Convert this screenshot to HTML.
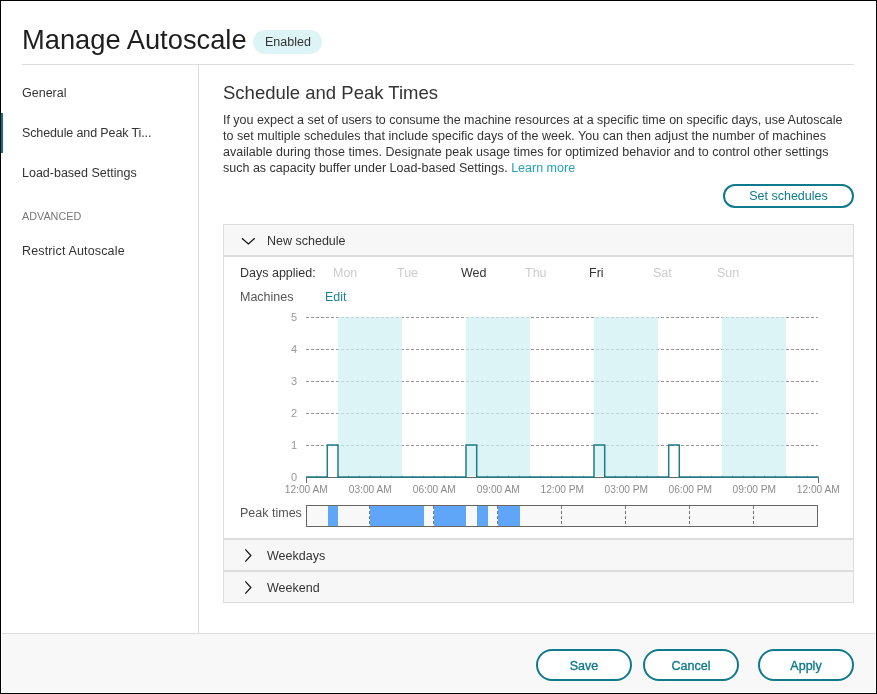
<!DOCTYPE html>
<html><head><meta charset="utf-8">
<style>
html,body{margin:0;padding:0;}
body{width:877px;height:694px;position:relative;overflow:hidden;background:#fff;font-family:"Liberation Sans",sans-serif;color:#333;}
.root{position:absolute;left:0;top:0;width:877px;height:694px;background:#fff;will-change:transform;}
.frame{position:absolute;left:0;top:0;width:875px;height:692px;border:1px solid #000;}
.a{position:absolute;white-space:nowrap;}
.t{font-size:12.5px;line-height:16px;}
.title{left:22px;top:24px;font-size:27.3px;line-height:32px;color:#1e1e1e;}
.badge{left:253px;top:30px;width:69px;height:24px;border-radius:12px;background:#dcf4f5;}
.badge span{position:absolute;left:12px;top:4px;font-size:12.5px;line-height:16px;color:#333;}
.hr{left:22px;top:64px;width:832px;height:1px;background:#ddd;}
.vsep{left:198px;top:65px;width:1px;height:568px;background:#ddd;}
.nav{left:22px;color:#333;}
.ind{left:1px;top:113px;width:2px;height:40px;background:#02778a;}
.adv{left:22px;font-size:10.8px;line-height:14px;color:#777;}
.h2{left:223px;top:82px;font-size:18.5px;line-height:22px;color:#333;}
.para{left:223px;top:112px;color:#333;}
.learn{color:#22a2b5;}
.btn{box-sizing:border-box;border:2px solid #0e7a8b;border-radius:16px;background:#fff;color:#0e7a8b;text-align:center;}
.acc{left:223px;top:224px;width:629px;height:377px;border:1px solid #ddd;}
.acc-h{position:absolute;left:0;width:629px;background:#f7f7f7;}
.footer{left:2px;top:633px;width:873px;height:58px;background:#f8f8f8;border-top:1px solid #ddd;}
</style></head>
<body>
<div class="root">
<div class="frame"></div>
<div class="a title">Manage Autoscale</div>
<div class="a badge"><span>Enabled</span></div>
<div class="a hr"></div>
<div class="a vsep"></div>

<div class="a ind"></div>
<div class="a t nav" style="top:85px">General</div>
<div class="a t nav" style="top:125px;letter-spacing:-0.12px">Schedule and Peak Ti...</div>
<div class="a t nav" style="top:165px">Load-based Settings</div>
<div class="a adv" style="top:209px">ADVANCED</div>
<div class="a t nav" style="top:243px;letter-spacing:0.15px">Restrict Autoscale</div>

<div class="a h2">Schedule and Peak Times</div>
<div class="a t para"><span style="letter-spacing:-0.016px">If you expect a set of users to consume the machine resources at a specific time on specific days, use Autoscale</span><br><span style="letter-spacing:0.025px">to set multiple schedules that include specific days of the week. You can then adjust the number of machines</span><br><span style="letter-spacing:0.016px">available during those times. Designate peak usage times for optimized behavior and to control other settings</span><br>such as capacity buffer under Load-based Settings. <span class="learn">Learn more</span></div>

<div class="a btn t" style="left:723px;top:184px;width:131px;height:24px;line-height:20px;">Set schedules</div>

<div class="a acc">
  <div class="acc-h" style="top:0;height:30px;border-bottom:2px solid #ddd;"></div>
  <div class="acc-h" style="top:313px;height:30px;border-top:2px solid #ddd;"></div>
  <div class="acc-h" style="top:345px;height:30px;border-top:2px solid #ddd;"></div>
</div>

<svg class="a" style="left:0;top:0" width="877" height="694" viewBox="0 0 877 694" font-family="Liberation Sans, sans-serif">
<polyline points="241.9,238.2 248.4,243.9 254.7,238.2" fill="none" stroke="#111" stroke-width="1.2"/>
<polyline points="245.3,549.3 250.9,555.5 245.3,561.7" fill="none" stroke="#111" stroke-width="1.2"/>
<polyline points="245.3,581.3 250.9,587.5 245.3,593.7" fill="none" stroke="#111" stroke-width="1.2"/>
<!--CHART-->
<line x1="306" y1="317.5" x2="818" y2="317.5" stroke="#999" stroke-dasharray="3 2"/>
<line x1="306" y1="349.5" x2="818" y2="349.5" stroke="#999" stroke-dasharray="3 2"/>
<line x1="306" y1="381.5" x2="818" y2="381.5" stroke="#999" stroke-dasharray="3 2"/>
<line x1="306" y1="413.5" x2="818" y2="413.5" stroke="#999" stroke-dasharray="3 2"/>
<line x1="306" y1="445.5" x2="818" y2="445.5" stroke="#999" stroke-dasharray="3 2"/>
<rect x="338.0" y="317" width="64.0" height="159" fill="#cdf0f1" fill-opacity="0.7"/>
<rect x="466.0" y="317" width="64.0" height="159" fill="#cdf0f1" fill-opacity="0.7"/>
<rect x="594.0" y="317" width="64.0" height="159" fill="#cdf0f1" fill-opacity="0.7"/>
<rect x="722.0" y="317" width="64.0" height="159" fill="#cdf0f1" fill-opacity="0.7"/>
<text x="297" y="321" text-anchor="end" font-size="11" fill="#999">5</text>
<text x="297" y="353" text-anchor="end" font-size="11" fill="#999">4</text>
<text x="297" y="385" text-anchor="end" font-size="11" fill="#999">3</text>
<text x="297" y="417" text-anchor="end" font-size="11" fill="#999">2</text>
<text x="297" y="449" text-anchor="end" font-size="11" fill="#999">1</text>
<text x="297" y="481" text-anchor="end" font-size="11" fill="#999">0</text>
<path d="M306.5,483 V477.5 H818.5 V483" fill="none" stroke="#666"/>
<path d="M306,477 H327.3 V445 H338.0 V477 H466.0 V445 H476.7 V477 H594.0 V445 H604.7 V477 H668.7 V445 H679.3 V477 H818.7" fill="none" stroke="#1f7d8b" stroke-width="1.5"/>
<path d="M316.67,475.6V477.5M327.33,475.6V477.5M338.00,475.6V477.5M348.67,475.6V477.5M359.33,475.6V477.5M370.00,475.6V477.5M380.67,475.6V477.5M391.33,475.6V477.5M402.00,475.6V477.5M412.67,475.6V477.5M423.33,475.6V477.5M434.00,475.6V477.5M444.67,475.6V477.5M455.33,475.6V477.5M466.00,475.6V477.5M476.67,475.6V477.5M487.33,475.6V477.5M498.00,475.6V477.5M508.67,475.6V477.5M519.33,475.6V477.5M530.00,475.6V477.5M540.67,475.6V477.5M551.33,475.6V477.5M562.00,475.6V477.5M572.67,475.6V477.5M583.33,475.6V477.5M594.00,475.6V477.5M604.67,475.6V477.5M615.33,475.6V477.5M626.00,475.6V477.5M636.67,475.6V477.5M647.33,475.6V477.5M658.00,475.6V477.5M668.67,475.6V477.5M679.33,475.6V477.5M690.00,475.6V477.5M700.67,475.6V477.5M711.33,475.6V477.5M722.00,475.6V477.5M732.67,475.6V477.5M743.33,475.6V477.5M754.00,475.6V477.5M764.67,475.6V477.5M775.33,475.6V477.5M786.00,475.6V477.5M796.67,475.6V477.5M807.33,475.6V477.5" stroke="#1b6773" stroke-width="1" stroke-opacity="0.45"/>
<text x="306.3" y="493" text-anchor="middle" font-size="10.2" fill="#8c8c8c">12:00 AM</text>
<text x="370.3" y="493" text-anchor="middle" font-size="10.2" fill="#8c8c8c">03:00 AM</text>
<text x="434.3" y="493" text-anchor="middle" font-size="10.2" fill="#8c8c8c">06:00 AM</text>
<text x="498.3" y="493" text-anchor="middle" font-size="10.2" fill="#8c8c8c">09:00 AM</text>
<text x="562.3" y="493" text-anchor="middle" font-size="10.2" fill="#8c8c8c">12:00 PM</text>
<text x="626.3" y="493" text-anchor="middle" font-size="10.2" fill="#8c8c8c">03:00 PM</text>
<text x="690.3" y="493" text-anchor="middle" font-size="10.2" fill="#8c8c8c">06:00 PM</text>
<text x="754.3" y="493" text-anchor="middle" font-size="10.2" fill="#8c8c8c">09:00 PM</text>
<text x="818.3" y="493" text-anchor="middle" font-size="10.2" fill="#8c8c8c">12:00 AM</text>
<rect x="306.5" y="505.5" width="511" height="21" fill="#f8f8f8" stroke="#666"/>
<rect x="328" y="506" width="10" height="20" fill="#5fa5f8"/>
<rect x="370" y="506" width="54" height="20" fill="#5fa5f8"/>
<rect x="434" y="506" width="32" height="20" fill="#5fa5f8"/>
<rect x="477" y="506" width="11" height="20" fill="#5fa5f8"/>
<rect x="498" y="506" width="22" height="20" fill="#5fa5f8"/>
<line x1="369.5" y1="506" x2="369.5" y2="526" stroke="#777" stroke-dasharray="3 2"/>
<line x1="433.5" y1="506" x2="433.5" y2="526" stroke="#777" stroke-dasharray="3 2"/>
<line x1="497.5" y1="506" x2="497.5" y2="526" stroke="#777" stroke-dasharray="3 2"/>
<line x1="561.5" y1="506" x2="561.5" y2="526" stroke="#777" stroke-dasharray="3 2"/>
<line x1="625.5" y1="506" x2="625.5" y2="526" stroke="#777" stroke-dasharray="3 2"/>
<line x1="689.5" y1="506" x2="689.5" y2="526" stroke="#777" stroke-dasharray="3 2"/>
<line x1="753.5" y1="506" x2="753.5" y2="526" stroke="#777" stroke-dasharray="3 2"/>
<!--/CHART-->
</svg>
<div class="a t" style="left:267px;top:233px">New schedule</div>
<div class="a t" style="left:240px;top:265px">Days applied:</div>
<div class="a t day" style="left:333px;top:265px;color:#ccc">Mon</div>
<div class="a t day" style="left:397px;top:265px;color:#ccc">Tue</div>
<div class="a t day" style="left:461px;top:265px;color:#333">Wed</div>
<div class="a t day" style="left:525px;top:265px;color:#ccc">Thu</div>
<div class="a t day" style="left:589px;top:265px;color:#333">Fri</div>
<div class="a t day" style="left:653px;top:265px;color:#ccc">Sat</div>
<div class="a t day" style="left:717px;top:265px;color:#ccc">Sun</div>
<div class="a t" style="left:240px;top:289px;color:#555">Machines</div>
<div class="a t" style="left:325px;top:289px;color:#1a8497">Edit</div>
<div class="a t" style="left:240px;top:505px;color:#555">Peak times</div>
<div class="a t" style="left:267px;top:548px">Weekdays</div>
<div class="a t" style="left:267px;top:580px">Weekend</div>

<div class="a footer"></div>
<div class="a btn t" style="left:536px;top:649px;width:96px;height:32px;line-height:30px;-webkit-text-stroke:0.35px #0e7a8b;">Save</div>
<div class="a btn t" style="left:643px;top:649px;width:96px;height:32px;line-height:30px;-webkit-text-stroke:0.35px #0e7a8b;">Cancel</div>
<div class="a btn t" style="left:758px;top:649px;width:96px;height:32px;line-height:30px;-webkit-text-stroke:0.35px #0e7a8b;">Apply</div>
</div>
</body></html>
